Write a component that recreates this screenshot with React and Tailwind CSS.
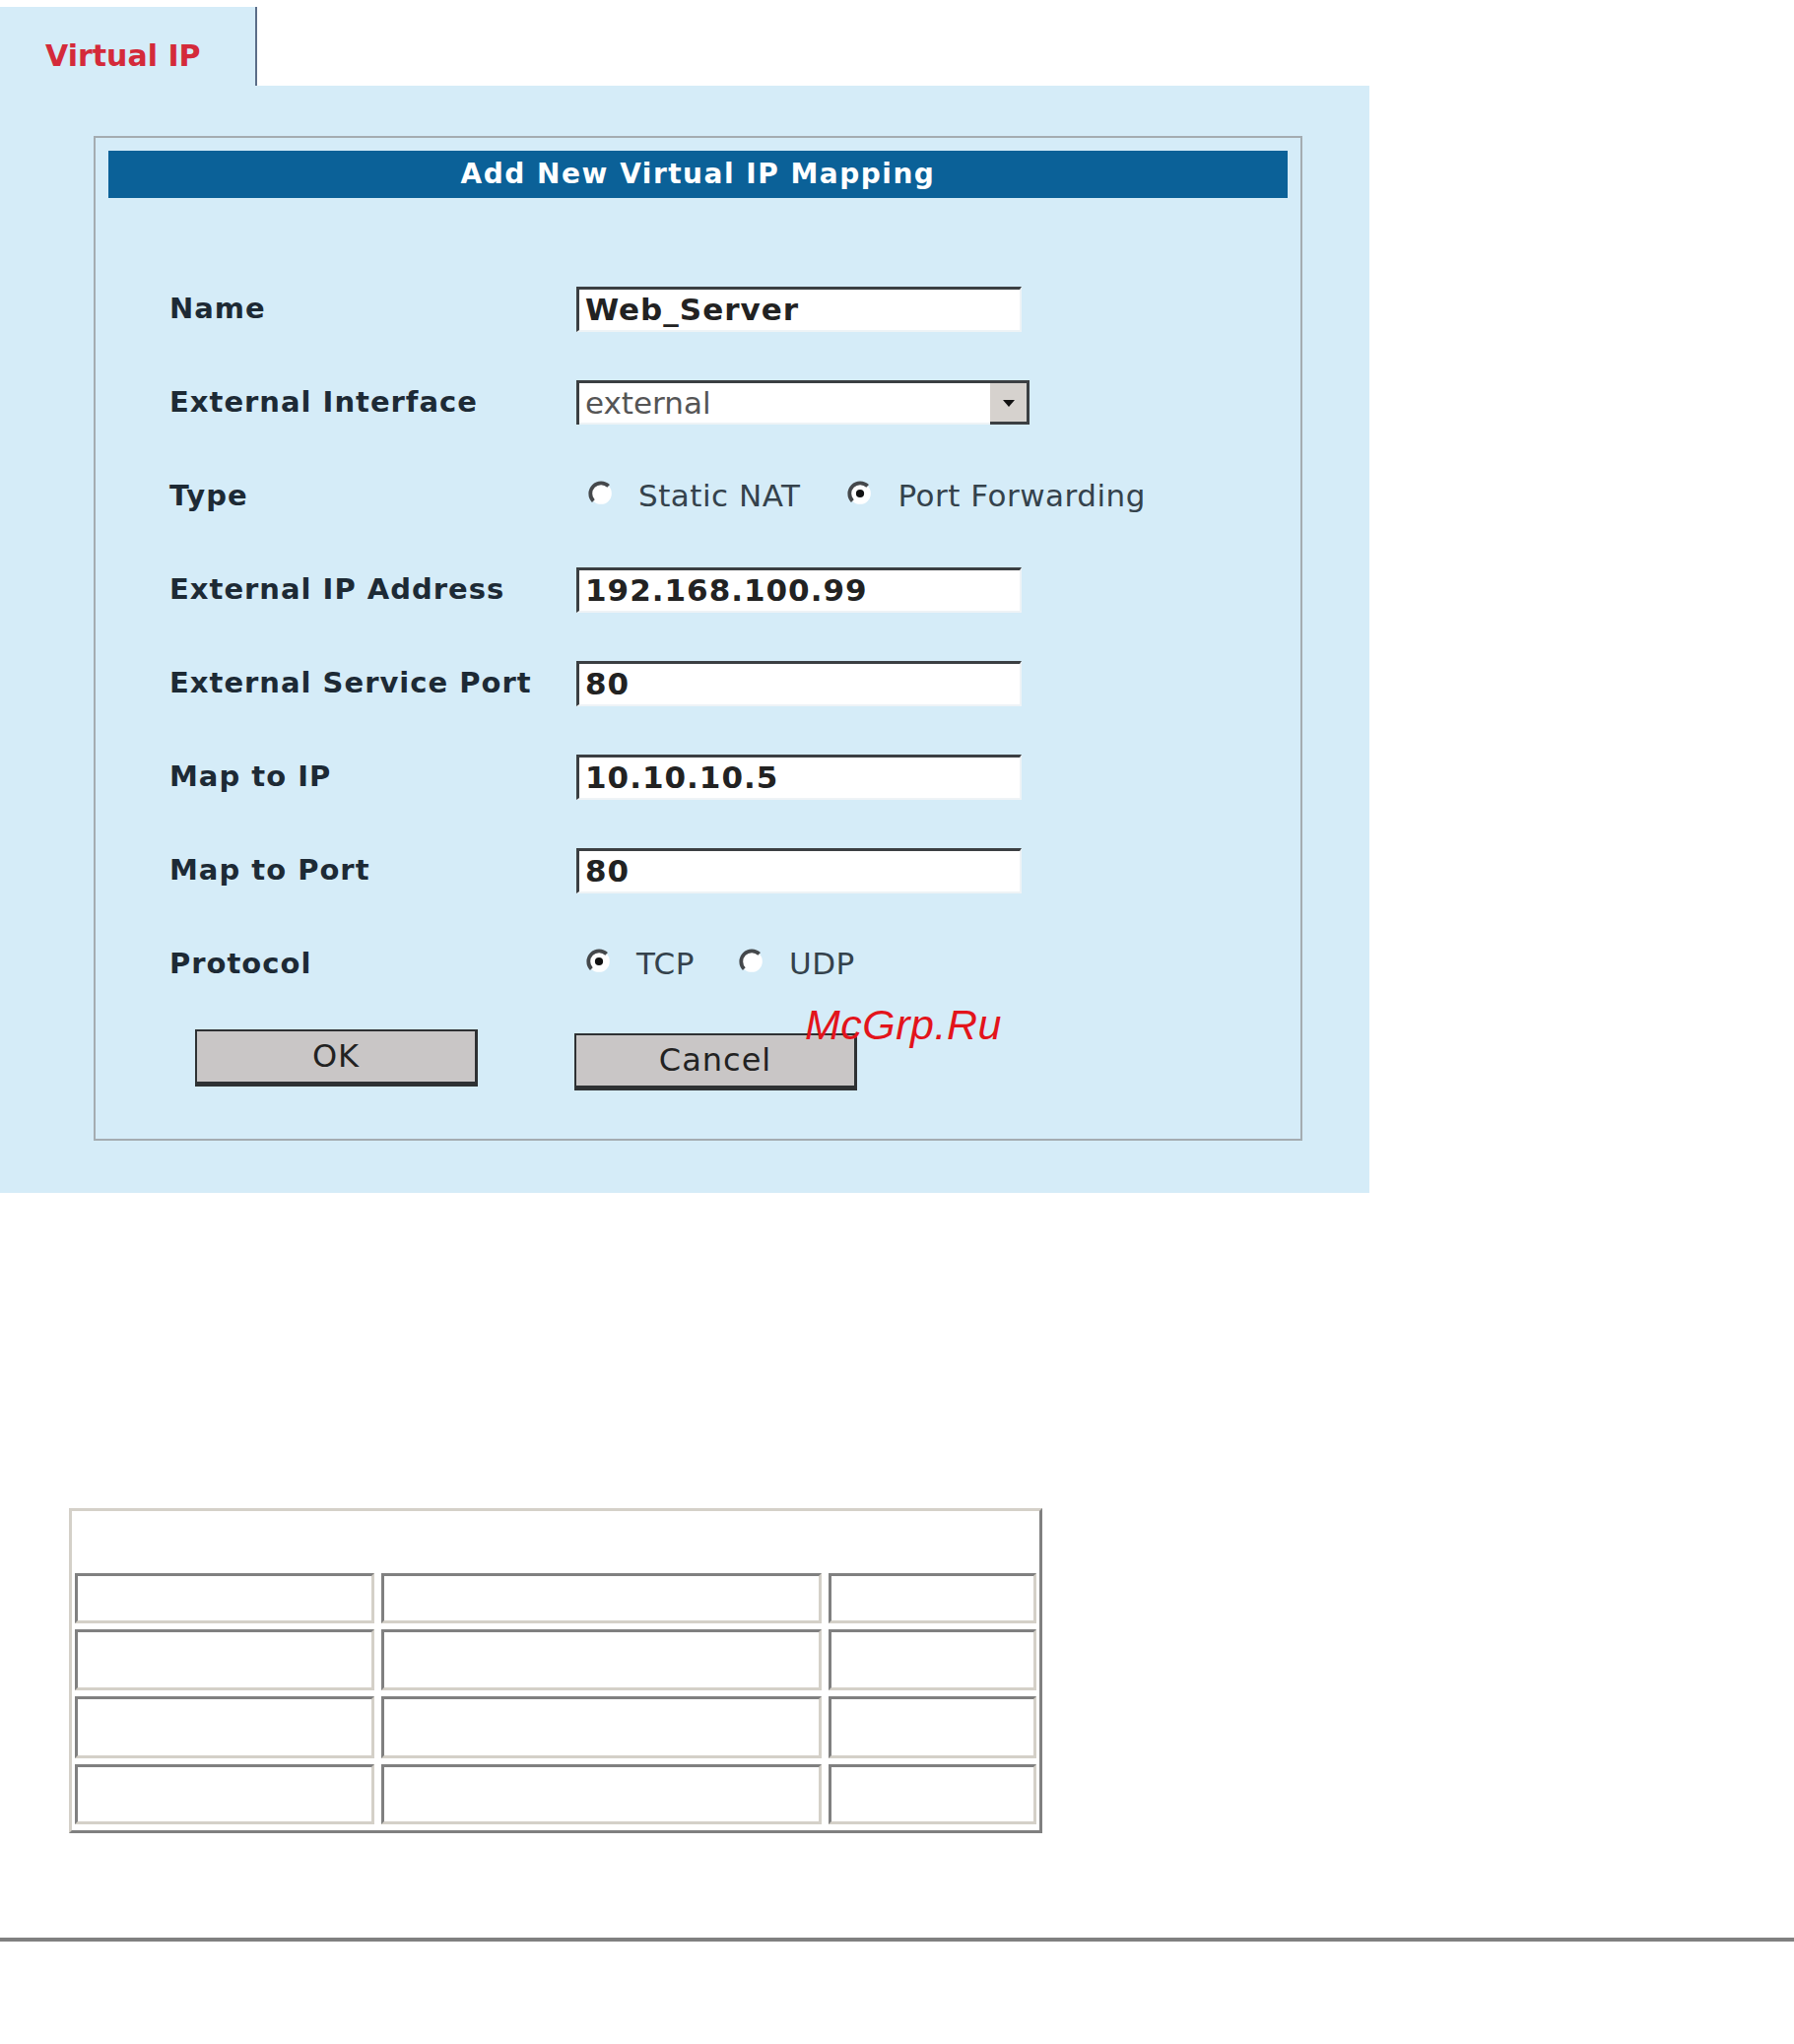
const labelCls = "w-[413px] shrink-0 text-[29px] font-bold tracking-[1px] text-[#1d2a35]";

function Row({ label, children }) {
  return (
    <div className="flex h-[95px] items-center">
      <div className={labelCls}>{label}</div>
      <div className="flex items-center">{children}</div>
    </div>
  );
}

function TextBox({ value }) {
  return (
    <div className="flex h-[46px] w-[452px] items-center border-t-[3px] border-l-[3px] border-r-2 border-b-2 border-t-[#3b3f42] border-l-[#3b3f42] border-r-[#eef3f6] border-b-[#eef3f6] bg-white pl-[6px] text-[31px] font-bold tracking-[1px] text-[#222]">
      {value}
    </div>
  );
}

function Radio({ checked, label, gap }) {
  return (
    <div className={"flex items-center " + gap}>
      <svg width="26" height="26" viewBox="0 0 24 24" className="mr-[25px] -mt-[6px] shrink-0">
        <circle cx="12" cy="12" r="10" fill="#ffffff" />
        <path d="M4.93 19.07 A10 10 0 0 1 19.07 4.93" fill="none" stroke="#45484b" strokeWidth="3.5" />
        {checked && <circle cx="12" cy="12" r="3.8" fill="#111" />}
      </svg>
      <span className="text-[31px] tracking-[0.5px] text-[#34424c]">{label}</span>
    </div>
  );
}

function Btn({ children, extra }) {
  return (
    <div
      className={
        "flex h-[58px] w-[287px] items-center justify-center border-t-2 border-l-2 border-r-[3px] border-b-[5px] border-[#2e3133] bg-[#c9c6c6] pb-[2px] text-[32px] tracking-[1px] text-[#222] " +
        extra
      }
    >
      {children}
    </div>
  );
}

function Cell({ h }) {
  return <div className={"border-[3px] border-t-[#808080] border-l-[#808080] border-r-[#d4d0c8] border-b-[#d4d0c8] bg-white " + h} />;
}

export default function App() {
  return (
    <div className="relative min-h-[2075px] w-[1821px] bg-white font-['DejaVu_Sans',sans-serif]">
      <div className="w-[1390px]">
        <div className="flex h-[87px] items-end">
          <div className="flex h-[80px] w-[261px] items-center border-r-2 border-[#5b6d88] bg-[#d5ecf8] pl-[46px] pt-[20px]">
            <span className="text-[30px] font-bold leading-[36px] text-[#d42a3a]">Virtual IP</span>
          </div>
        </div>

        <div className="bg-[#d5ecf8] pb-[53px] pl-[95px] pr-[68px] pt-[51px]">
          <div className="border-2 border-[#a4acb1] px-[13px] pb-[49px] pt-[13px]">
            <div className="flex h-[48px] items-center justify-center bg-[#0b6198] text-[28px] font-bold tracking-[1.5px] text-white">
              Add New Virtual IP Mapping
            </div>

            <div className="mt-[65px] pl-[62px]">
              <Row label="Name">
                <TextBox value="Web_Server" />
              </Row>
              <Row label="External Interface">
                <div className="flex h-[45px] w-[460px] border-t-[3px] border-l-[3px] border-r-[3px] border-[#3b3f42] bg-white">
                  <div className="flex flex-1 items-center border-b-2 border-[#eef3f6] pl-[6px] text-[31px] text-[#555]">external</div>
                  <div className="flex w-[37px] items-center justify-center border-b-[3px] border-[#3b3f42] bg-[#d6d2ce]">
                    <svg width="14" height="10" viewBox="0 0 14 10">
                      <path d="M1 2 L13 2 L7 9 Z" fill="#111" />
                    </svg>
                  </div>
                </div>
              </Row>
              <Row label="Type">
                <div className="flex items-center pl-[12px]">
                  <Radio label="Static NAT" gap="mr-[48px]" />
                  <Radio checked label="Port Forwarding" gap="" />
                </div>
              </Row>
              <Row label="External IP Address">
                <TextBox value="192.168.100.99" />
              </Row>
              <Row label="External Service Port">
                <TextBox value="80" />
              </Row>
              <Row label="Map to IP">
                <TextBox value="10.10.10.5" />
              </Row>
              <Row label="Map to Port">
                <TextBox value="80" />
              </Row>
              <Row label="Protocol">
                <div className="flex items-center pl-[10px]">
                  <Radio checked label="TCP" gap="mr-[45px]" />
                  <Radio label="UDP" gap="" />
                </div>
              </Row>
            </div>

            <div className="mt-[19px] flex items-start pl-[88px]">
              <Btn extra="">OK</Btn>
              <Btn extra="ml-[98px] mt-[4px]">Cancel</Btn>
            </div>
          </div>
        </div>
      </div>

      <div className="ml-[70px] mt-[320px] w-[988px] border-[3px] border-t-[#d4d0c8] border-l-[#d4d0c8] border-r-[#808080] border-b-[#808080] px-[3px] pb-[6px] pt-[63px]">
        <div className="grid grid-cols-[304px_447px_211px] gap-x-[7px] gap-y-[6px]">
          <Cell h="h-[51px]" />
          <Cell h="h-[51px]" />
          <Cell h="h-[51px]" />
          <Cell h="h-[62px]" />
          <Cell h="h-[62px]" />
          <Cell h="h-[62px]" />
          <Cell h="h-[63px]" />
          <Cell h="h-[63px]" />
          <Cell h="h-[63px]" />
          <Cell h="h-[61px]" />
          <Cell h="h-[61px]" />
          <Cell h="h-[61px]" />
        </div>
      </div>

      <div className="mt-[106px] h-[4px] w-full bg-[#808080]" />

      <span className="absolute left-[817px] top-[1014px] font-['Liberation_Sans',sans-serif] text-[43px] italic leading-[52px] tracking-[0.5px] text-[#e3141b]">
        McGrp.Ru
      </span>
    </div>
  );
}
